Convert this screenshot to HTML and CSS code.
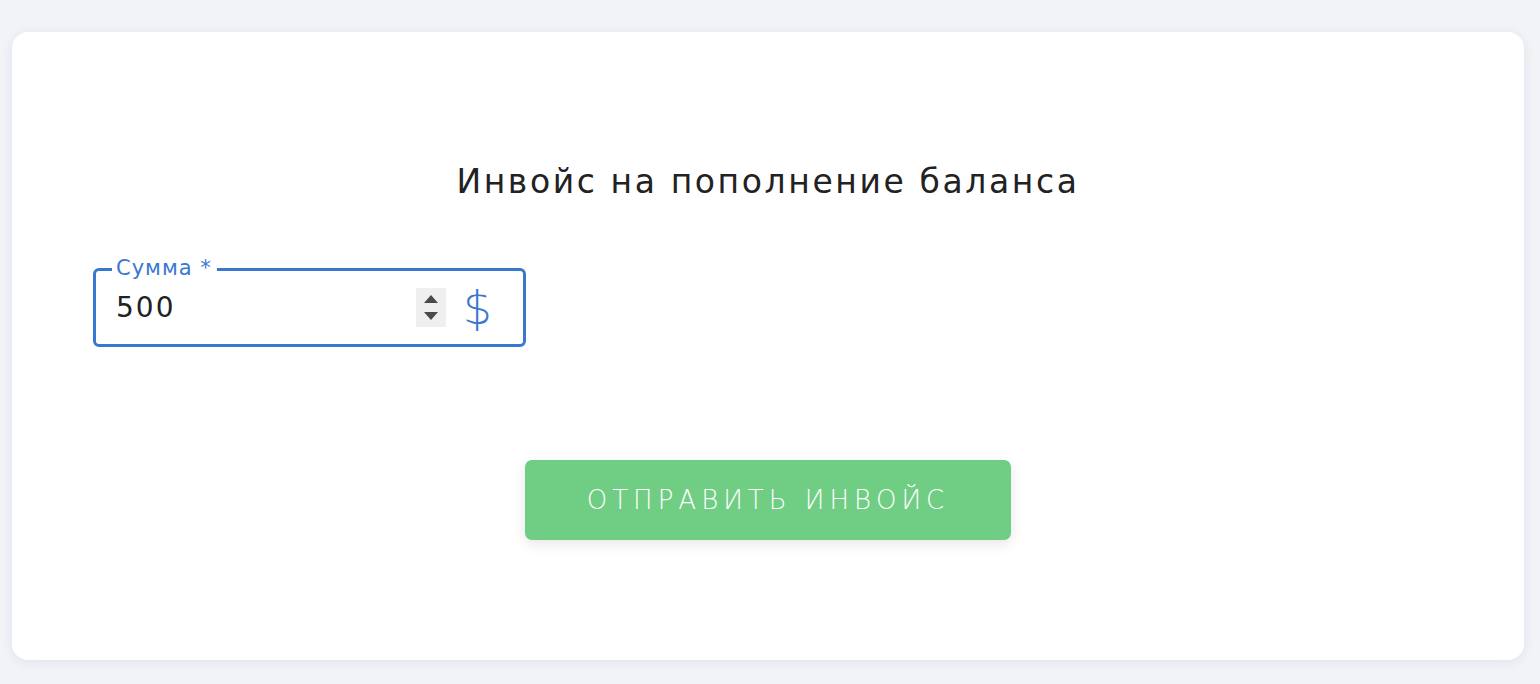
FILE: index.html
```html
<!DOCTYPE html>
<html lang="ru">
<head>
<meta charset="utf-8">
<title>Инвойс</title>
<link rel="stylesheet" href="styles.css">
</head>
<body>
<main class="card">
  <h1 class="title">Инвойс на пополнение баланса</h1>
  <form class="form">
    <div class="field">
      <label class="field-label" for="amount">Сумма *</label>
      <input class="field-input" id="amount" type="text" value="500">
      <div class="spinner">
        <span class="arrow arrow-up"></span>
        <span class="arrow arrow-down"></span>
      </div>
      <span class="currency">$</span>
    </div>
    <div class="actions">
      <button class="submit" type="button">Отправить инвойс</button>
    </div>
  </form>
</main>
</body>
</html>
```

FILE: styles.css
```css
html, body {
  margin: 0;
  padding: 0;
  background: #f2f3f7;
}
body {
  padding: 32px 16px 24px 12px;
  font-family: "DejaVu Sans", "Noto Sans", sans-serif;
  color: #222;
}
.card {
  background: #fff;
  border-radius: 16px;
  box-shadow: 0 2px 12px rgba(30, 40, 80, 0.08);
  height: 628px;
  box-sizing: border-box;
  padding: 120px 81px 0 81px;
}
.title {
  margin: 0;
  text-align: center;
  font-size: 33px;
  line-height: 60px;
  font-weight: 400;
  letter-spacing: 2.6px;
  color: #222;
}
.form {
  margin-top: 56px;
}
.field {
  position: relative;
  width: 433px;
  height: 79px;
  box-sizing: border-box;
  border: 3px solid #3a78d0;
  border-radius: 6px;
  display: flex;
  align-items: center;
  padding: 0 31px 0 20px;
  gap: 17px;
}
.field-label {
  position: absolute;
  left: 16px;
  top: -16px;
  padding: 0 5px 0 4px;
  background: #fff;
  color: #3a78d0;
  font-size: 21px;
  line-height: 26px;
  letter-spacing: 1px;
}
.field-input {
  flex: 1;
  min-width: 0;
  border: 0;
  outline: 0;
  padding: 0;
  font: inherit;
  font-size: 28px;
  letter-spacing: 2px;
  color: #222;
  background: transparent;
}
.spinner {
  width: 30px;
  height: 39px;
  background: #efefef;
  display: flex;
  flex-direction: column;
  align-items: center;
  justify-content: center;
  gap: 9px;
}
.arrow {
  width: 0;
  height: 0;
  border-left: 7px solid transparent;
  border-right: 7px solid transparent;
}
.arrow-up { border-bottom: 8px solid #4a4a4a; }
.arrow-down { border-top: 8px solid #4a4a4a; }
.currency {
  color: #3a78d0;
  font-size: 46px;
  line-height: 46px;
  font-weight: 300;
}
.actions {
  display: flex;
  justify-content: center;
  margin-top: 113px;
}
.submit {
  width: 486px;
  height: 80px;
  border: 0;
  border-radius: 7px;
  background: #70cd84;
  color: #fff;
  font: inherit;
  font-size: 26px;
  font-weight: 300;
  letter-spacing: 5px;
  text-transform: uppercase;
  box-shadow: 0 4px 14px rgba(0, 0, 0, 0.1);
  cursor: pointer;
}
```
